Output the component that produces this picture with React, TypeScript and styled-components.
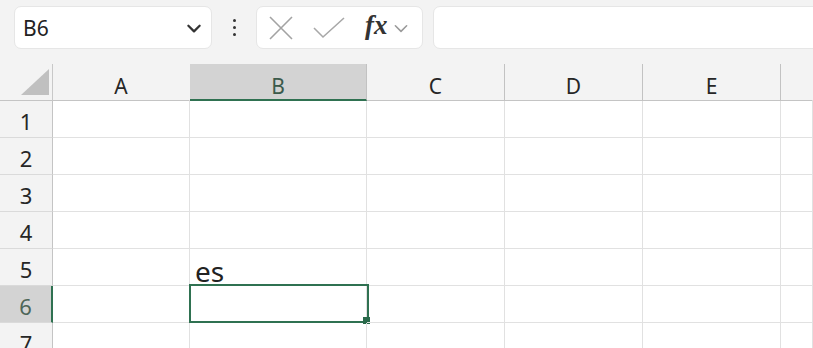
import React from "react";
import styled, { createGlobalStyle } from "styled-components";

const GlobalStyle = createGlobalStyle`
  html, body { margin: 0; padding: 0; }
  body {
    background: #f3f3f3;
    font-family: "Noto Sans", "Open Sans", sans-serif;
    overflow: hidden;
  }
`;

const Page = styled.div`
  width: 813px;
  height: 348px;
  overflow: hidden;
  background: #f3f3f3;
`;

const Toolbar = styled.div`
  height: 64px;
  box-sizing: border-box;
  padding: 6px 0 0 14px;
  display: flex;
  align-items: flex-start;
`;

const Box = styled.div`
  height: 43px;
  box-sizing: border-box;
  background: #ffffff;
  border: 1px solid #e6e6e6;
  border-radius: 7px;
  display: flex;
  align-items: center;
`;

const NameBox = styled(Box)`
  width: 198px;
  padding: 0 8px 0 8px;
  justify-content: space-between;
  font-size: 21px;
  color: #222;
`;

const DotsWrap = styled.div`
  width: 44px;
  height: 43px;
  display: flex;
  flex-direction: column;
  align-items: center;
  justify-content: center;
  gap: 4px;
`;

const Dot = styled.span`
  width: 3px;
  height: 3px;
  border-radius: 50%;
  background: #333;
`;

const FxBox = styled(Box)`
  width: 167px;
  padding: 0 0 0 12px;
  gap: 0;
`;

const FxText = styled.span`
  font-family: "Liberation Serif", "DejaVu Serif", serif;
  font-style: italic;
  font-weight: bold;
  font-size: 27px;
  color: #333;
  margin: -4px 4px 0 20px;
`;

const FormulaInput = styled(Box)`
  flex: 1;
  margin-left: 10px;
  margin-right: -10px;
`;

const Sheet = styled.div`
  display: grid;
  grid-template-columns: 53px 137px 177px 138px 138px 138px 1fr;
  grid-template-rows: 37px repeat(7, 37px);
  background: #ffffff;
`;

const Corner = styled.div`
  background: #f3f3f3;
  border-right: 1px solid #c8c8c8;
  border-bottom: 1px solid #c4c4c4;
  display: flex;
  align-items: flex-end;
  justify-content: flex-end;
  padding: 0 3px 5px 0;
`;

const ColHead = styled.div<{ $active?: boolean; $sep?: boolean }>`
  background: ${(p) => (p.$active ? "#d3d3d3" : "#f3f3f3")};
  border-right: 1px solid ${(p) => (p.$sep ? "#c2c2c2" : "#f3f3f3")};
  border-bottom: ${(p) => (p.$active ? "2px solid #2f7151" : "1px solid #c4c4c4")};
  color: ${(p) => (p.$active ? "#3b5a4b" : "#262626")};
  font-size: 21px;
  display: flex;
  justify-content: center;
  align-items: flex-start;
  padding-top: 12px;
  line-height: 1;
  box-sizing: border-box;
`;

const RowHead = styled.div<{ $active?: boolean }>`
  background: ${(p) => (p.$active ? "#d3d3d3" : "#f3f3f3")};
  border-right: ${(p) => (p.$active ? "2px solid #2f7151" : "1px solid #c4c4c4")};
  border-bottom: 1px solid #dadada;
  color: ${(p) => (p.$active ? "#4d6658" : "#262626")};
  font-size: 22px;
  display: flex;
  justify-content: center;
  align-items: center;
  padding-top: 3px;
  box-sizing: border-box;
  line-height: 1;
`;

const Cell = styled.div`
  position: relative;
  border-right: 1px solid #e1e1e1;
  border-bottom: 1px solid #e1e1e1;
  box-sizing: border-box;
  display: flex;
  align-items: flex-end;
  padding-left: 5px;
  font-size: 28px;
  line-height: 1;
  color: #222;
`;

const CellText = styled.span`
  margin-bottom: 0px;
`;

const Selection = styled.div`
  position: absolute;
  left: -1px;
  top: -2px;
  right: -3px;
  bottom: -1px;
  border: 2px solid #2f7151;
  pointer-events: none;
`;

const FillHandle = styled.div`
  position: absolute;
  right: -3px;
  bottom: -3px;
  width: 7px;
  height: 7px;
  background: #2a6a4b;
`;

const cols = ["A", "B", "C", "D", "E", ""];

const ChevronDown = ({ size, color, width }: { size: number; color: string; width: number }) => (
  <svg width={size} height={size} viewBox="0 0 16 16" fill="none">
    <path d="M3 6 L8 11 L13 6" stroke={color} strokeWidth={width} strokeLinecap="round" strokeLinejoin="round" />
  </svg>
);

export default function App() {
  const rows = [1, 2, 3, 4, 5, 6, 7];
  return (
    <Page>
      <GlobalStyle />
      <Toolbar>
        <NameBox>
          <span>B6</span>
          <ChevronDown size={18} color="#333" width={2} />
        </NameBox>
        <DotsWrap>
          <Dot />
          <Dot />
          <Dot />
        </DotsWrap>
        <FxBox>
          <svg width="24" height="24" viewBox="0 0 24 24" fill="none">
            <path d="M1 1 L23 23 M23 1 L1 23" stroke="#a3a3a3" strokeWidth="1.6" />
          </svg>
          <svg width="32" height="22" viewBox="0 0 32 22" fill="none" style={{ marginLeft: 20 }}>
            <path d="M1 11 L10 20 L31 1" stroke="#a8a8a8" strokeWidth="1.6" />
          </svg>
          <FxText>fx</FxText>
          <ChevronDown size={18} color="#9a9a9a" width={1.4} />
        </FxBox>
        <FormulaInput />
      </Toolbar>
      <Sheet>
        <Corner>
          <svg width="28" height="26" viewBox="0 0 28 26">
            <polygon points="28,0 28,26 0,26" fill="#c0c0c0" />
          </svg>
        </Corner>
        {cols.map((c, i) => (
          <ColHead key={i} $active={c === "B"} $sep={c !== "A" && c !== ""}>
            {c}
          </ColHead>
        ))}
        {rows.map((r) => (
          <React.Fragment key={r}>
            <RowHead $active={r === 6}>{r}</RowHead>
            {cols.map((c, i) => (
              <Cell key={i}>
                {r === 5 && c === "B" && <CellText>es</CellText>}
                {r === 6 && c === "B" && (
                  <Selection>
                    <FillHandle />
                  </Selection>
                )}
              </Cell>
            ))}
          </React.Fragment>
        ))}
      </Sheet>
    </Page>
  );
}
